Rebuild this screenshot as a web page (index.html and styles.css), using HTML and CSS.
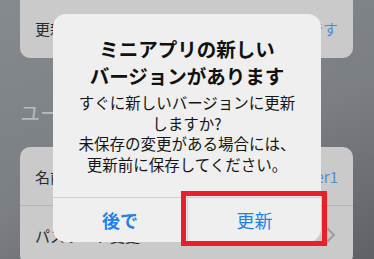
FILE: index.html
```html
<!DOCTYPE html>
<html lang="ja">
<head>
    <meta charset="UTF-8">
    <meta name="viewport" content="width=device-width, initial-scale=1.0">
    <title>アップデート確認</title>
    <link rel="stylesheet" href="styles.css">
</head>
<body>
    <div class="screen">
        <!-- 背景の設定画面 (暗転) -->
        <div class="card card-top">
            <div class="row">
                <span class="row-label">更新</span>
                <span class="row-value">最新バージョンです</span>
            </div>
        </div>

        <h2 class="section-title">ユーザー情報</h2>

        <div class="card">
            <div class="row row-tall">
                <span class="row-label">名前</span>
                <span class="row-value">user1</span>
            </div>
            <div class="row row-tall">
                <span class="row-label">パスワード変更</span>
                <span class="chevron">
                    <svg width="10" height="16" viewBox="0 0 10 16"><path d="M1.5 1.5 L8 8 L1.5 14.5" fill="none" stroke="#9c9c9c" stroke-width="2"/></svg>
                </span>
            </div>
        </div>
    </div>

    <!-- アラート -->
    <div class="alert">
        <div class="alert-body">
            <h1 class="alert-title">ミニアプリの新しい<br>バージョンがあります</h1>
            <p class="alert-message">すぐに新しいバージョンに更新<br>しますか?<br>未保存の変更がある場合には、<br>更新前に保存してください。</p>
        </div>
        <div class="alert-actions">
            <button class="alert-btn alert-btn-bold">後で</button>
            <button class="alert-btn">更新</button>
        </div>
    </div>

    <div class="highlight"></div>
</body>
</html>
```

FILE: styles.css
```css
* {
    margin: 0;
    padding: 0;
    box-sizing: border-box;
}

body {
    font-family: "Noto Sans CJK JP", "Noto Sans", sans-serif;
    width: 374px;
    height: 259px;
    overflow: hidden;
    position: relative;
    background: linear-gradient(160deg, #858a8e 0%, #7b7f83 55%, #5e6266 100%);
}

.screen {
    padding: 0 21px 0 20px;
}

.card {
    background: #cacaca;
    border-radius: 10px;
    overflow: hidden;
}

.card-top {
    height: 58px;
    border-radius: 0 0 10px 10px;
    display: flex;
    align-items: flex-end;
}

.row {
    display: flex;
    align-items: center;
    justify-content: space-between;
    width: 100%;
    padding: 0 15px;
    font-size: 15px;
    color: #2a2a2a;
}

.card-top .row {
    height: 52px;
    padding-bottom: 8px;
}

.row-tall {
    height: 59px;
    border-bottom: 1px solid #b4b4b4;
}

.row-value {
    color: #4f8fd0;
}

.chevron {
    display: flex;
    margin-right: 2px;
}

.section-title {
    font-size: 20px;
    font-weight: 400;
    color: #b6babe;
    line-height: 28px;
    margin: 41px 0 20px 0;
}

.alert {
    position: absolute;
    left: 53px;
    top: 14px;
    width: 268px;
    height: 228px;
    background: #efefef;
    border-radius: 13px;
    display: flex;
    flex-direction: column;
    overflow: hidden;
}

.alert-body {
    padding: 21px 8px 0;
    text-align: center;
    height: 184px;
    border-bottom: 1px solid #cfcfcf;
}

.alert-title {
    font-size: 19.5px;
    font-weight: 700;
    line-height: 27px;
    color: #111;
}

.alert-message {
    margin-top: 3px;
    font-size: 15.5px;
    line-height: 20.5px;
    color: #151515;
}

.alert-actions {
    flex: 1;
    display: grid;
    grid-template-columns: 1fr 1fr;
}

.alert-btn {
    border: none;
    background: none;
    font-family: inherit;
    font-size: 18px;
    color: #1f7fef;
    cursor: pointer;
}

.alert-btn + .alert-btn {
    border-left: 1px solid #cfcfcf;
}

.alert-btn-bold {
    font-weight: 700;
}

.highlight {
    position: absolute;
    left: 181px;
    top: 191px;
    width: 146px;
    height: 55px;
    border: 5px solid #e8202a;
}
```
